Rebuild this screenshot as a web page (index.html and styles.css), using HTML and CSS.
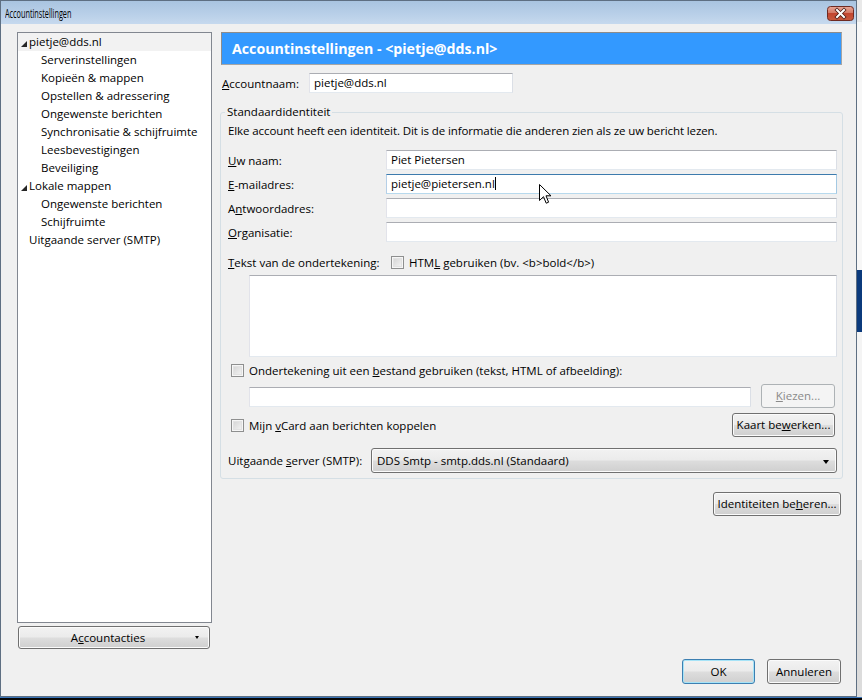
FILE: index.html
```html
<!DOCTYPE html>
<html lang="nl">
<head>
<meta charset="utf-8">
<title>Accountinstellingen</title>
<link rel="stylesheet" href="styles.css">
</head>
<body>
<div class="window">
  <div class="titlebar">
    <span class="title">Accountinstellingen</span>
    <span class="close">
      <svg width="27" height="15" viewBox="0 0 27 15">
        <defs>
          <linearGradient id="cg" x1="0" y1="0" x2="0" y2="1">
            <stop offset="0" stop-color="#e8a898"/>
            <stop offset="0.45" stop-color="#d47966"/>
            <stop offset="0.5" stop-color="#c2452f"/>
            <stop offset="1" stop-color="#c85a3e"/>
          </linearGradient>
        </defs>
        <rect x="0.5" y="0.5" width="26" height="14" rx="3" fill="url(#cg)" stroke="#6e2a22"/>
        <path d="M10 4 L17 11 M17 4 L10 11" stroke="#4a1a14" stroke-width="3.6" stroke-linecap="square"/>
        <path d="M10 4 L17 11 M17 4 L10 11" stroke="#ffffff" stroke-width="2" stroke-linecap="square"/>
      </svg>
    </span>
  </div>

  <div class="main">
    <div class="leftcol">
      <div class="tree">
        <div class="row top sel"><span class="twisty"><svg width="6" height="6" viewBox="0 0 6 6"><polygon points="6,0 6,6 0,6" fill="#262626"/></svg></span>pietje@dds.nl</div>
        <div class="row child">Serverinstellingen</div>
        <div class="row child">Kopieën &amp; mappen</div>
        <div class="row child">Opstellen &amp; adressering</div>
        <div class="row child">Ongewenste berichten</div>
        <div class="row child">Synchronisatie &amp; schijfruimte</div>
        <div class="row child">Leesbevestigingen</div>
        <div class="row child">Beveiliging</div>
        <div class="row top"><span class="twisty"><svg width="6" height="6" viewBox="0 0 6 6"><polygon points="6,0 6,6 0,6" fill="#262626"/></svg></span>Lokale mappen</div>
        <div class="row child">Ongewenste berichten</div>
        <div class="row child">Schijfruimte</div>
        <div class="row top plain">Uitgaande server (SMTP)</div>
      </div>
      <button class="btn menubtn"><span class="menulabel">A<u>c</u>countacties</span><span class="ddarrow"></span></button>
    </div>

    <div class="rightcol">
      <div class="header">Accountinstellingen - &lt;pietje@dds.nl&gt;</div>

      <div class="acctrow">
        <span class="acctlabel"><u>A</u>ccountnaam:</span>
        <div class="input acctinput">pietje@dds.nl</div>
      </div>

      <fieldset class="group">
        <legend>Standaardidentiteit</legend>
        <p class="desc">Elke account heeft een identiteit. Dit is de informatie die anderen zien als ze uw bericht lezen.</p>

        <div class="fields">
          <span class="flabel"><u>U</u>w naam:</span>
          <div class="input">Piet Pietersen</div>
          <span class="flabel"><u>E</u>-mailadres:</span>
          <div class="input focused">pietje@pietersen.nl<span class="caret"></span></div>
          <span class="flabel">A<u>n</u>twoordadres:</span>
          <div class="input"></div>
          <span class="flabel"><u>O</u>rganisatie:</span>
          <div class="input"></div>
        </div>

        <div class="sigrow">
          <span class="siglabel"><u>T</u>ekst van de ondertekening:</span>
          <span class="cb"></span>
          <span class="cbtext">HTM<u>L</u> gebruiken (bv. &lt;b&gt;bold&lt;/b&gt;)</span>
        </div>

        <div class="textarea"></div>

        <div class="cbrow">
          <span class="cb"></span>
          <span class="cbtext">Ondertekening uit een <u>b</u>estand gebruiken (tekst, HTML of afbeelding):</span>
        </div>

        <div class="filerow">
          <div class="input fileinput"></div>
          <button class="btn disabled kiezen"><u>K</u>iezen...</button>
        </div>

        <div class="vcardrow">
          <span class="cb"></span>
          <span class="cbtext grow">Mijn <u>v</u>Card aan berichten koppelen</span>
          <button class="btn kaart">Kaart be<u>w</u>erken...</button>
        </div>

        <div class="smtprow">
          <span class="smtplabel">Uitgaande <u>s</u>erver (SMTP):</span>
          <div class="select">DDS Smtp - smtp.dds.nl (Standaard)<span class="selarrow"></span></div>
        </div>
      </fieldset>

      <div class="idrow">
        <button class="btn idbtn">Identiteiten be<u>h</u>eren...</button>
      </div>
    </div>
  </div>

  <div class="footer">
    <button class="btn ok">OK</button>
    <button class="btn cancel">Annuleren</button>
  </div>

  <svg class="cursor" width="13" height="21" viewBox="0 0 13 21">
    <path d="M0.5 0.5 L0.5 16.5 L4.5 12.7 L7.2 19.2 L9.6 18.2 L7 11.8 L12 11.8 Z" fill="#ffffff" stroke="#000000" stroke-width="1" stroke-linejoin="miter"/>
  </svg>
</div>
</body>
</html>
```

FILE: styles.css
```css
html, body {
  margin: 0;
  padding: 0;
}

body {
  width: 862px;
  height: 700px;
  overflow: hidden;
  font-family: "Open Sans", "Noto Sans", sans-serif;
  font-size: 11.5px;
  color: #000;
  background:
    linear-gradient(#3a74b8 0 1px, #050505 1px) bottom left / 100% 3px no-repeat,
    linear-gradient(#e9e9e9 0 22px, #f7f7f7 22px 270px, #0b3a7c 270px 332px, #f4f4f4 332px 560px, #dcdcdc 560px);
}

u {
  text-decoration: underline;
  text-underline-offset: 1px;
}

.window {
  position: relative;
  width: 857px;
  height: 697px;
  box-sizing: border-box;
  border: 1px solid #5e6f82;
  background: #f0f0f0;
  display: flex;
  flex-direction: column;
}

/* Title bar */
.titlebar {
  height: 23px;
  box-sizing: border-box;
  padding: 4px 2px 0 4px;
  display: flex;
  justify-content: space-between;
  align-items: flex-start;
  background: linear-gradient(#a9c4e0, #b8cfe8 55%, #c6d9ee);
}

.title {
  display: inline-block;
  line-height: 17px;
  font-size: 13px;
  transform: scaleX(0.56);
  transform-origin: left center;
  color: #000;
}

.close {
  display: block;
  width: 27px;
  height: 15px;
  margin-top: 1px;
}

.close svg {
  display: block;
}

/* Main area */
.main {
  display: flex;
  gap: 8px;
  padding: 8px 13px 0 16px;
}

.leftcol {
  width: 195px;
  display: flex;
  flex-direction: column;
}

.tree {
  height: 591px;
  box-sizing: border-box;
  border: 1px solid #828790;
  background: #fff;
}

.row {
  height: 18px;
  line-height: 18px;
  white-space: nowrap;
  display: flex;
  align-items: center;
}

.row.top {
  padding-left: 3px;
}

.row.plain {
  padding-left: 11px;
}

.row.child {
  padding-left: 23px;
}

.row.sel {
  background: #f2f2f2;
}

.twisty {
  width: 8px;
  height: 18px;
  display: flex;
  align-items: center;
  padding-top: 3px;
  box-sizing: border-box;
}

.twisty svg {
  display: block;
}

/* Buttons */
.btn {
  font-family: inherit;
  font-size: inherit;
  color: #000;
  height: 24px;
  box-sizing: border-box;
  border: 1px solid #707070;
  border-radius: 3px;
  background: linear-gradient(#f2f2f2 0%, #ebebeb 48%, #dddddd 52%, #cfcfcf 100%);
  box-shadow: inset 0 0 0 1px #fbfbfb;
  padding: 0;
  margin: 0;
  line-height: 20px;
  text-align: center;
}

.btn.disabled {
  border-color: #adb2b5;
  background: #f4f4f4;
  box-shadow: none;
  color: #8a8a8a;
}

.menubtn {
  position: relative;
  margin-top: 3px;
  margin-left: 1px;
  width: 192px;
  height: 23px;
}

.menulabel {
  display: inline-block;
  margin-left: -12px;
}

.ddarrow {
  position: absolute;
  right: 10px;
  top: 9px;
  width: 0;
  height: 0;
  border-left: 2.5px solid transparent;
  border-right: 2.5px solid transparent;
  border-top: 3px solid #000;
}

/* Right column */
.rightcol {
  width: 623px;
  display: flex;
  flex-direction: column;
}

.header {
  margin: 0 1px;
  height: 33px;
  box-sizing: border-box;
  border: 1px solid #a5a5a5;
  border-top-color: #8c8c8c;
  border-left-color: #8c8c8c;
  background: #3399ff;
  color: #fff;
  font-weight: bold;
  font-size: 14.2px;
  line-height: 31px;
  padding-left: 10px;
  white-space: nowrap;
}

.acctrow {
  margin-top: 8px;
  display: flex;
  align-items: center;
  height: 20px;
}

.acctlabel {
  width: 89px;
  padding-left: 2px;
  box-sizing: border-box;
}

.input {
  height: 20px;
  box-sizing: border-box;
  border: 1px solid;
  border-color: #abadb3 #dbdfe6 #e3e9ef #e2e3ea;
  background: #fff;
  padding-left: 4px;
  line-height: 18px;
  white-space: nowrap;
}

.input.focused {
  border-color: #3d7bad #a4c9e3 #b7d9ed #b5cfe7;
}

.acctinput {
  width: 204px;
}

.caret {
  display: inline-block;
  width: 1px;
  height: 13px;
  background: #000;
  vertical-align: -2px;
  margin-left: 0;
}

/* Group box */
.group {
  margin: 11px 0 0 0;
  padding: 0 5px 5px 7px;
  border: 1px solid #d5dfe5;
  border-radius: 3px;
  min-width: 0;
}

.group legend {
  padding: 0 2px;
  margin-left: -3px;
  line-height: 16px;
}

.desc {
  margin: 3px 0 0 0;
  line-height: 16px;
  white-space: nowrap;
  letter-spacing: -0.1px;
}

.fields {
  margin-top: 11px;
  display: grid;
  grid-template-columns: 158px 451px;
  grid-auto-rows: 20px;
  row-gap: 4px;
  align-items: center;
}

.sigrow {
  margin-top: 12px;
  height: 17px;
  display: flex;
  align-items: center;
}

.siglabel {
  width: 163px;
}

.cb {
  width: 13px;
  height: 13px;
  box-sizing: border-box;
  border: 1px solid #8e8f8f;
  background: linear-gradient(135deg, #d0d0d0, #f8f8f8);
  box-shadow: inset 0 0 0 1px #f6f6f6, inset 0 0 0 2px #e2e2e2;
  flex: none;
}

.cbtext {
  margin-left: 5px;
  white-space: nowrap;
}

.textarea {
  margin: 4px 0 0 21px;
  width: 588px;
  height: 82px;
  box-sizing: border-box;
  border: 1px solid;
  border-color: #abadb3 #dbdfe6 #e3e9ef #e2e3ea;
  background: #fff;
}

.cbrow {
  margin-top: 5px;
  height: 17px;
  display: flex;
  align-items: center;
  padding-left: 3px;
}

.filerow {
  margin-top: 5px;
  height: 24px;
  display: flex;
  align-items: flex-start;
}

.fileinput {
  margin: 3px 0 0 21px;
  width: 502px;
}

.kiezen {
  margin-left: 10px;
  width: 74px;
}

.vcardrow {
  margin-top: 5px;
  height: 24px;
  display: flex;
  align-items: center;
  padding-left: 3px;
}

.grow {
  flex: 1;
}

.kaart {
  width: 103px;
  margin-right: 2px;
}

.smtprow {
  margin-top: 11px;
  height: 25px;
  display: flex;
  align-items: center;
}

.smtplabel {
  flex: 1;
  white-space: nowrap;
}

.select {
  position: relative;
  width: 466px;
  height: 25px;
  box-sizing: border-box;
  border: 1px solid #707070;
  border-radius: 3px;
  background: linear-gradient(#f2f2f2 0%, #ebebeb 48%, #dddddd 52%, #cfcfcf 100%);
  box-shadow: inset 0 0 0 1px #fbfbfb;
  padding-left: 5px;
  line-height: 23px;
  white-space: nowrap;
}

.selarrow {
  position: absolute;
  right: 7px;
  top: 11px;
  width: 0;
  height: 0;
  border-left: 3.5px solid transparent;
  border-right: 3.5px solid transparent;
  border-top: 4px solid #000;
}

.idrow {
  margin-top: 13px;
  display: flex;
  justify-content: flex-end;
}

.idbtn {
  width: 128px;
  margin-right: 2px;
}

/* Footer */
.footer {
  margin-top: 10px;
  display: flex;
  justify-content: flex-end;
  gap: 12px;
  padding-right: 15px;
}

.ok,
.cancel {
  height: 25px;
  line-height: 21px;
}

.ok {
  width: 73px;
  border-color: #3c7fb1;
  box-shadow: inset 0 0 0 1px #a6e3f7;
}

.cancel {
  width: 74px;
}

.cursor {
  position: absolute;
  left: 538px;
  top: 183px;
}
```
